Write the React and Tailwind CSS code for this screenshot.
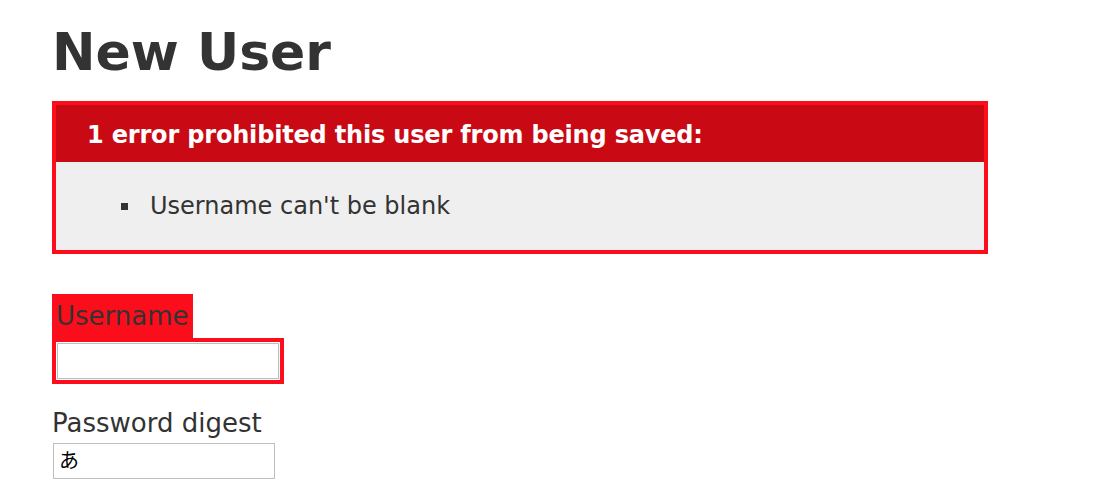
export default function App() {
  return (
    <div className="min-h-[500px] bg-white pl-[52px] pt-[22px] text-[#333]" style={{ fontFamily: '"DejaVu Sans", Verdana, sans-serif' }}>
      <h1 className="text-[52px] font-bold leading-[60px] h-[60px] mb-[19px]">New User</h1>

      <div className="w-[936px] border-4 border-[#fc0d1b] bg-[#efefef]">
        <h2 className="bg-[#c90a15] text-white font-bold text-[24px] leading-[36px] tracking-[-0.18px] pl-[31px] pt-[12px] pb-[9px]">
          1 error prohibited this user from being saved:
        </h2>
        <ul className="py-[26px] pl-[65px]">
          <li className="flex items-center h-[36px] text-[24px] leading-[36px]">
            <span className="w-[7px] h-[7px] bg-[#333] mr-[22px]"></span>
            <span>Username can't be blank</span>
          </li>
        </ul>
      </div>

      <div className="mt-[40px]">
        <div className="w-fit bg-[#fc0d1b] p-[4px]">
          <label className="block text-[26px] leading-[36px]">Username</label>
        </div>
        <div className="w-fit bg-[#fc0d1b] p-[4px]">
          <input type="text" className="block m-[1px] w-[222px] h-[36px] border border-[#c0c0c0] bg-white shadow-[0_0_0_1px_#fff] outline-none" />
        </div>
      </div>

      <div className="mt-[21px]">
        <label className="block text-[26px] leading-[36px]">Password digest</label>
        <input
          type="text"
          defaultValue="あ"
          className="block mt-[2px] ml-[1px] w-[222px] h-[36px] border border-[#c0c0c0] bg-white pl-[5px] pb-[4px] text-[20px] text-black outline-none"
          style={{ fontFamily: '"Noto Sans CJK JP", sans-serif' }}
        />
      </div>
    </div>
  );
}
